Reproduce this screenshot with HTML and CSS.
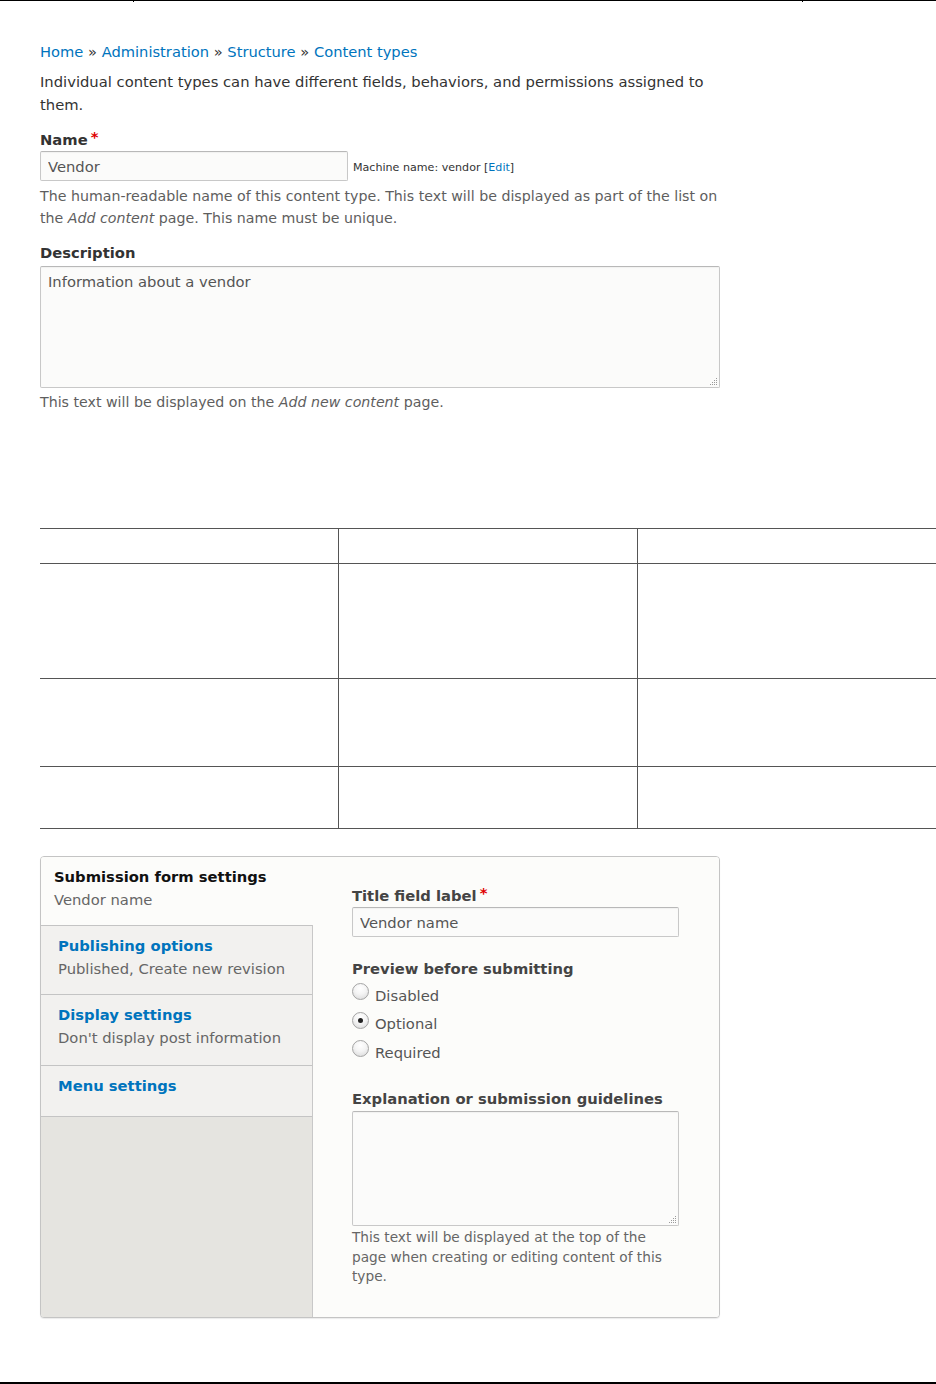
FILE: index.html
```html
<!DOCTYPE html>
<html lang="en">
<head>
<meta charset="utf-8">
<title>Content types</title>
<link rel="stylesheet" href="styles.css">
</head>
<body>
<div class="page-top"><span class="seg seg1"></span><span class="seg seg2"></span><span class="seg seg3"></span></div>
<main class="content">
  <nav class="breadcrumb"><a href="#">Home</a> » <a href="#">Administration</a> » <a href="#">Structure</a> » <a href="#">Content types</a></nav>
  <p class="intro">Individual content types can have different fields, behaviors, and permissions assigned to them.</p>

  <div class="form-item name-item">
    <label class="label" for="name">Name<span class="req">*</span></label>
    <div class="name-row">
      <input id="name" class="text-input name-input" type="text" value="Vendor">
      <span class="machine">Machine name: vendor [<a href="#">Edit</a>]</span>
    </div>
    <div class="description">The human-readable name of this content type. This text will be displayed as part of the list on the <em>Add content</em> page. This name must be unique.</div>
  </div>

  <div class="form-item desc-item">
    <label class="label" for="desc">Description</label>
    <div class="textarea-wrap desc-wrap">
      <textarea id="desc" class="textarea desc-area">Information about a vendor</textarea>
      <svg class="grip" width="9" height="9" viewBox="0 0 9 9"><g fill="#9a9a9a"><rect x="7" y="1" width="1" height="1"/><rect x="5" y="3" width="1" height="1"/><rect x="7" y="3" width="1" height="1"/><rect x="3" y="5" width="1" height="1"/><rect x="5" y="5" width="1" height="1"/><rect x="7" y="5" width="1" height="1"/><rect x="1" y="7" width="1" height="1"/><rect x="3" y="7" width="1" height="1"/><rect x="5" y="7" width="1" height="1"/><rect x="7" y="7" width="1" height="1"/></g></svg>
    </div>
    <div class="description">This text will be displayed on the <em>Add new content</em> page.</div>
  </div>

  <table class="grid">
    <thead>
      <tr class="r1"><th></th><th></th><th></th></tr>
    </thead>
    <tbody>
      <tr class="r2"><td></td><td></td><td></td></tr>
      <tr class="r3"><td></td><td></td><td></td></tr>
      <tr class="r4"><td></td><td></td><td></td></tr>
    </tbody>
  </table>

  <div class="vtabs">
    <ul class="vtabs-menu">
      <li class="vtab selected">
        <div class="vtab-title">Submission form settings</div>
        <div class="vtab-summary">Vendor name</div>
      </li>
      <li class="vtab">
        <a class="vtab-title" href="#">Publishing options</a>
        <div class="vtab-summary">Published, Create new revision</div>
      </li>
      <li class="vtab vtab-tall">
        <a class="vtab-title" href="#">Display settings</a>
        <div class="vtab-summary">Don't display post information</div>
      </li>
      <li class="vtab no-summary">
        <a class="vtab-title" href="#">Menu settings</a>
      </li>
    </ul>
    <div class="vtabs-pane">
      <label class="label pane-label" for="title-label">Title field label<span class="req">*</span></label>
      <input id="title-label" class="text-input title-input" type="text" value="Vendor name">

      <div class="preview">
        <div class="label pane-label">Preview before submitting</div>
        <div class="radio-row"><span class="radio"></span><span class="radio-label">Disabled</span></div>
        <div class="radio-row"><span class="radio checked"></span><span class="radio-label">Optional</span></div>
        <div class="radio-row"><span class="radio"></span><span class="radio-label">Required</span></div>
      </div>

      <label class="label pane-label expl-label" for="help">Explanation or submission guidelines</label>
      <div class="textarea-wrap help-wrap">
        <textarea id="help" class="textarea help-area"></textarea>
        <svg class="grip" width="9" height="9" viewBox="0 0 9 9"><g fill="#9a9a9a"><rect x="7" y="1" width="1" height="1"/><rect x="5" y="3" width="1" height="1"/><rect x="7" y="3" width="1" height="1"/><rect x="3" y="5" width="1" height="1"/><rect x="5" y="5" width="1" height="1"/><rect x="7" y="5" width="1" height="1"/><rect x="1" y="7" width="1" height="1"/><rect x="3" y="7" width="1" height="1"/><rect x="5" y="7" width="1" height="1"/><rect x="7" y="7" width="1" height="1"/></g></svg>
      </div>
      <div class="pane-help">This text will be displayed at the top of the page when creating or editing content of this type.</div>
    </div>
  </div>
</main>
<div class="page-bottom"></div>
</body>
</html>
```
FILE: styles.css
```css
html, body {
  margin: 0;
  padding: 0;
}

body {
  font-family: "DejaVu Sans", "Noto Sans", sans-serif;
  font-size: 14.75px;
  line-height: 23px;
  color: #333;
  background: #fff;
  min-height: 1384px;
  display: flex;
  flex-direction: column;
}

a {
  color: #0074bd;
  text-decoration: none;
}

/* page edges */
.page-top {
  display: flex;
  height: 2px;
  flex: none;
}
.seg {
  border-top: 1px solid #000;
}
.seg1 { width: 133px; }
.seg2 { width: 668px; border-left: 1px solid #000; }
.seg3 { flex: 1; border-left: 1px solid #000; }

.page-bottom {
  margin-top: auto;
  border-top: 2px solid #000;
  flex: none;
}

.content {
  padding: 37.5px 0 0 40px;
}

.breadcrumb {
  margin: 0;
  font-size: 14.68px;
}

.intro {
  margin: 7px 0 0;
  width: 680px;
}

/* form items */
.label {
  display: block;
  font-weight: bold;
  line-height: 23px;
}
.req {
  color: #e00000;
  margin-left: 3px;
  position: relative;
  top: -3px;
}

.name-item {
  margin-top: 12px;
}
.name-row {
  display: flex;
  align-items: center;
  gap: 5px;
  margin-top: 0.5px;
}

.text-input {
  box-sizing: border-box;
  height: 30px;
  border: 1px solid #c8c8c8;
  border-top-color: #b8b8b8;
  border-radius: 2px;
  background: #fbfbfa;
  font-family: "DejaVu Sans", sans-serif;
  font-size: 14.75px;
  color: #555;
  padding: 0 7px;
  margin: 0;
  box-shadow: inset 0 1px 1px rgba(0, 0, 0, 0.04);
}
.name-input {
  width: 308px;
}

.machine {
  font-size: 11.1px;
  line-height: 16px;
  color: #333;
  margin-top: 3px;
}

.description {
  margin-top: 4px;
  width: 680px;
  font-size: 14.2px;
  line-height: 22px;
  color: #5e5e5e;
}

.desc-item {
  margin-top: 11.5px;
}

.textarea-wrap {
  position: relative;
  margin-top: 2.5px;
}
.textarea {
  display: block;
  box-sizing: border-box;
  border: 1px solid #c8c8c8;
  border-top-color: #b8b8b8;
  border-radius: 2px;
  background: #fbfbfa;
  font-family: "DejaVu Sans", sans-serif;
  font-size: 14.75px;
  line-height: 23px;
  color: #555;
  padding: 3px 7px;
  margin: 0;
  resize: none;
  overflow: hidden;
  box-shadow: inset 0 1px 1px rgba(0, 0, 0, 0.04);
}
.desc-area {
  width: 680px;
  height: 122px;
}
.grip {
  position: absolute;
  right: 2px;
  bottom: 2px;
}
.desc-wrap {
  width: 680px;
}
.desc-item .description {
  margin-top: 3px;
}

/* table */
.grid {
  margin-top: 115px;
  width: 896px;
  border-collapse: collapse;
  table-layout: fixed;
}
.grid th,
.grid td {
  padding: 0;
  border-top: 1px solid #555;
  border-bottom: 1px solid #555;
}
.grid th + th,
.grid td + td {
  border-left: 1px solid #555;
}
.grid .r1 { height: 35px; }
.grid .r2 { height: 115px; }
.grid .r3 { height: 88px; }
.grid .r4 { height: 62px; }

/* vertical tabs */
.vtabs {
  margin-top: 27px;
  width: 680px;
  height: 462px;
  box-sizing: border-box;
  border: 1px solid #c4c4c4;
  border-radius: 4px;
  display: flex;
  background: #fcfcfa;
  overflow: hidden;
  box-shadow: 0 1px 1px rgba(0, 0, 0, 0.08);
}
.vtabs-menu {
  width: 272px;
  box-sizing: border-box;
  margin: 0;
  padding: 0;
  list-style: none;
  background: #e5e4e0;
  border-right: 1px solid #c8c8c8;
  flex: none;
}
.vtab {
  padding: 8px 10px 14px 17px;
  background: #f2f1ef;
  border-top: 1px solid #c4c4c4;
}
.vtab.selected {
  border-top: 0;
  background: #fcfcfa;
  margin-right: -1px;
  padding-left: 13px;
}
.vtab.vtab-tall {
  padding-bottom: 16px;
}
.vtab.no-summary {
  padding-bottom: 19px;
  border-bottom: 1px solid #c4c4c4;
}
.vtab-title {
  display: block;
  font-weight: bold;
  color: #0074bd;
}
.selected .vtab-title {
  color: #111;
}
.vtab-summary {
  color: #666;
}

.vtabs-pane {
  flex: 1;
  padding: 26.5px 39px 0 39px;
  background: #fcfcfa;
}
.pane-label {
  color: #444;
}
.title-input {
  display: block;
  width: 327px;
  margin-top: 0.5px;
}

.preview {
  margin-top: 19.5px;
}
.radio-row {
  display: flex;
  align-items: flex-start;
  margin-top: 5.5px;
  color: #555;
}
.preview .pane-label + .radio-row {
  margin-top: 4px;
}
.radio {
  box-sizing: border-box;
  width: 17px;
  height: 17px;
  border-radius: 50%;
  border: 1px solid #a4a4a4;
  background: radial-gradient(circle at 50% 30%, #ffffff 0%, #f4f4f4 45%, #d6d6d6 100%);
  margin-right: 6px;
  margin-top: -0.5px;
  display: flex;
  align-items: center;
  justify-content: center;
  flex: none;
}
.radio.checked::after {
  content: "";
  width: 5px;
  height: 5px;
  border-radius: 50%;
  background: #222;
}

.expl-label {
  margin-top: 23px;
}
.help-wrap {
  width: 327px;
  margin-top: 1.5px;
}
.help-area {
  width: 327px;
  height: 115px;
}
.pane-help {
  margin-top: 2px;
  width: 327px;
  font-size: 13.7px;
  line-height: 19.5px;
  color: #666;
}
```
